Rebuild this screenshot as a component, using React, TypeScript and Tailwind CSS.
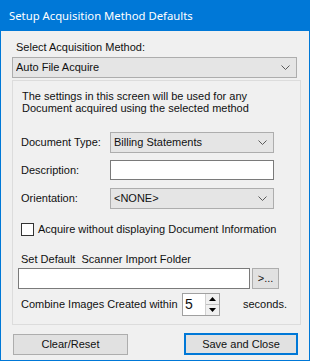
function Chevron() {
  return (
    <svg width="9" height="5" viewBox="0 0 9 5" className="shrink-0">
      <path d="M0.5 0.5 L4.5 4.5 L8.5 0.5" fill="none" stroke="#5a5a5a" strokeWidth="1" />
    </svg>
  );
}

function Combo({ value, className = "" }: { value: string; className?: string }) {
  return (
    <div className={`flex items-center h-[21px] border border-[#adadad] bg-[#e5e5e5] pl-[3px] pr-[6px] ${className}`}>
      <span className="flex-1 truncate">{value}</span>
      <Chevron />
    </div>
  );
}

function FieldRow({ label, children, className = "" }: { label: string; children: React.ReactNode; className?: string }) {
  return (
    <div className={`flex items-center pl-[8px] ${className}`}>
      <span className="w-[89px] shrink-0">{label}</span>
      {children}
    </div>
  );
}

export default function App() {
  return (
    <div className="w-[310px] h-[361px] flex flex-col bg-[#0078d7] font-['Liberation_Sans',Arial,sans-serif] text-[11px] leading-[13px] text-[#111111]">
      <div className="h-[31px] shrink-0 flex items-center pl-[9px] text-white text-[11.3px] font-['Noto_Sans',sans-serif]">
        Setup Acquisition Method Defaults
      </div>
      <div className="flex-1 mx-px mb-px bg-[#f0f0f0] flex flex-col pl-[11px]">
        <div className="mt-[10px] ml-[4px]">Select Acquisition Method:</div>
        <Combo value="Auto File Acquire" className="mt-[3px] w-[285px]" />

        <div className="mt-[2px] w-[289px] h-[245px] border border-[#dcdcdc] flex flex-col">
          <p className="mt-[9px] ml-[9px] leading-[12px]">
            The settings in this screen will be used for any
            <br />
            Document acquired using the selected method
          </p>

          <FieldRow label="Document Type:" className="mt-[18px]">
            <Combo value="Billing Statements" className="w-[164px]" />
          </FieldRow>

          <FieldRow label="Description:" className="mt-[7px]">
            <div className="w-[164px] h-[20px] border border-[#7a7a7a] bg-white" />
          </FieldRow>

          <FieldRow label="Orientation:" className="mt-[8px]">
            <Combo value="<NONE>" className="w-[164px]" />
          </FieldRow>

          <label className="mt-[14px] ml-[8px] flex items-center gap-[4px]">
            <span className="w-[13px] h-[13px] border border-[#333333] bg-white shrink-0" />
            <span>Acquire without displaying Document Information</span>
          </label>

          <div className="mt-[17px] ml-[8px]">Set Default&nbsp; Scanner Import Folder</div>

          <div className="mt-[2px] ml-[5px] flex items-center gap-[2px]">
            <div className="w-[232px] h-[21px] border border-[#7a7a7a] bg-white" />
            <button className="w-[27px] h-[21px] border border-[#adadad] bg-[#e1e1e1] flex items-center justify-center pb-[1px]">
              &gt;...
            </button>
          </div>

          <div className="mt-[4px] ml-[8px] flex items-center">
            <span className="w-[161px] shrink-0">Combine Images Created within</span>
            <div className="w-[38px] h-[23px] border border-[#a0a0a0] bg-white flex">
              <span className="flex-1 pl-[2px] pt-[3px] text-[14px] leading-[15px]">5</span>
              <div className="w-[14px] flex flex-col border-l border-[#d0d0d0]">
                <div className="flex-1 flex items-center justify-center bg-[#f0f0f0] border-b border-[#c0c0c0]">
                  <svg width="7" height="4" viewBox="0 0 7 4"><path d="M3.5 0 L7 4 L0 4 Z" fill="#000" /></svg>
                </div>
                <div className="flex-1 flex items-center justify-center bg-[#f0f0f0]">
                  <svg width="7" height="4" viewBox="0 0 7 4"><path d="M0 0 L7 0 L3.5 4 Z" fill="#000" /></svg>
                </div>
              </div>
            </div>
            <span className="ml-[23px]">seconds.</span>
          </div>
        </div>

        <div className="mt-[8px] flex items-center">
          <button className="ml-[1px] w-[115px] h-[21px] border border-[#adadad] bg-[#e1e1e1] flex items-center justify-center">
            Clear/Reset
          </button>
          <button className="ml-[56px] w-[114px] h-[22px] border-2 border-[#0078d7] bg-[#e1e1e1] flex items-center justify-center">
            Save and Close
          </button>
        </div>
      </div>
    </div>
  );
}
